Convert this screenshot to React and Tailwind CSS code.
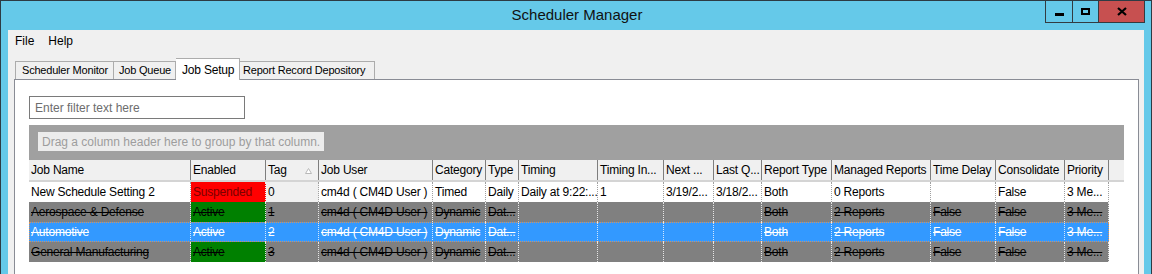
import React from 'react';

const columns = [
  { title: 'Job Name', w: 'w-[162px]' },
  { title: 'Enabled', w: 'w-[75px]' },
  { title: 'Tag', w: 'w-[53px]', sort: true },
  { title: 'Job User', w: 'w-[114px]' },
  { title: 'Category', w: 'w-[53px]' },
  { title: 'Type', w: 'w-[33px]' },
  { title: 'Timing', w: 'w-[79px]' },
  { title: 'Timing In...', w: 'w-[66px]' },
  { title: 'Next ...', w: 'w-[50px]' },
  { title: 'Last Q...', w: 'w-[48px]' },
  { title: 'Report Type', w: 'w-[70px]' },
  { title: 'Managed Reports', w: 'w-[99px]' },
  { title: 'Time Delay', w: 'w-[65px]' },
  { title: 'Consolidate', w: 'w-[69px]' },
  { title: 'Priority', w: 'w-[44px]' },
];

const rows = [
  {
    kind: 'normal',
    cells: ['New Schedule Setting 2', 'Suspended', '0', 'cm4d ( CM4D User )', 'Timed', 'Daily', 'Daily at 9:22:...', '1', '3/19/2...', '3/18/2...', 'Both', '0 Reports', '', 'False', '3 Me...'],
  },
  {
    kind: 'disabled',
    cells: ['Aerospace & Defense', 'Active', '1', 'cm4d ( CM4D User )', 'Dynamic', 'Dat...', '', '', '', '', 'Both', '2 Reports', 'False', 'False', '3 Me...'],
  },
  {
    kind: 'selected',
    cells: ['Automotive', 'Active', '2', 'cm4d ( CM4D User )', 'Dynamic', 'Dat...', '', '', '', '', 'Both', '2 Reports', 'False', 'False', '3 Me...'],
  },
  {
    kind: 'disabled',
    cells: ['General Manufacturing', 'Active', '3', 'cm4d ( CM4D User )', 'Dynamic', 'Dat...', '', '', '', '', 'Both', '2 Reports', 'False', 'False', '3 Me...'],
  },
];

function cellStyle(kind, col, value) {
  // Enabled column keeps its own colours, except on the selected row
  if (kind === 'selected') return 'bg-[#3399ff] text-white line-through border-[#cfe6ff]';
  if (col === 1) {
    if (value === 'Suspended') return 'bg-[#ff0000] text-[#7a0000] border-[#f0f0f0]';
    return 'bg-[#008000] text-black line-through border-[#e0e0e0]';
  }
  if (kind === 'disabled') return 'bg-[#808080] text-black line-through border-[#e6e6e6]';
  if (col === 2) return 'bg-[#f0f0f0] text-black border-[#a0a0a0]';
  return 'bg-white text-black border-[#a0a0a0]';
}

function WindowButtons() {
  return (
    <div className="absolute right-[6px] top-0 flex h-[22px] border border-t-0 border-[#333b40]">
      <div className="flex w-[27px] items-center justify-center border-r border-[#333b40]">
        <div className="mt-[5px] h-[3px] w-[9px] bg-black"></div>
      </div>
      <div className="flex w-[26px] items-center justify-center border-r border-[#333b40]">
        <div className="h-[7px] w-[9px] border-2 border-black"></div>
      </div>
      <div className="flex w-[45px] items-center justify-center bg-[#c75050]">
        <svg width="10" height="9" viewBox="0 0 10 9">
          <path d="M1 1 L9 8 M9 1 L1 8" stroke="black" strokeWidth="2.2" />
        </svg>
      </div>
    </div>
  );
}

export default function App() {
  return (
    <div className="relative h-[274px] w-[1152px] overflow-hidden border-x border-t border-[#2d3b44] bg-[#65c9e9] font-['Liberation_Sans',Arial,sans-serif] text-[12px] text-black">
      {/* title bar */}
      <div className="flex h-[29px] items-center justify-center pl-[2px] text-[15px] text-[#111]">
        Scheduler Manager
      </div>
      <WindowButtons />

      <div className="flex h-[244px] pl-[7px]">
        <div className="flex w-[1136px] flex-col bg-[#f0f0f0]">
          {/* menu */}
          <div className="flex h-[22px] items-center gap-[14px] pl-[7px]">
            <span>File</span>
            <span>Help</span>
          </div>

          {/* tabs */}
          <div className="mt-[6px] flex h-[21px] items-end whitespace-nowrap pl-[7px] text-[11px] tracking-[-0.2px]">
            <div className="flex h-[18px] w-[99px] items-center border border-b-0 border-[#acacac] pl-[6px]">Scheduler Monitor</div>
            <div className="flex h-[18px] w-[62px] items-center border border-b-0 border-l-0 border-[#acacac] pl-[5px]">Job Queue</div>
            <div className="relative z-10 -mb-px flex h-[22px] w-[64px] items-center border border-b-0 border-l-0 border-[#acacac] bg-white pl-[6px] text-[12px]">Job Setup</div>
            <div className="flex h-[18px] w-[135px] items-center border border-b-0 border-l-0 border-[#acacac] pl-[3px]">Report Record Depository</div>
          </div>

          {/* tab page */}
          <div className="ml-[6px] flex w-[1125px] flex-1 flex-col items-start border border-b-0 border-[#898c95] bg-white pl-[14px] pt-[16px]">
            <div className="flex h-[23px] w-[216px] items-center border border-[#7a7a7a] pl-[5px] text-[#6d6d6d]">
              Enter filter text here
            </div>

            <div className="mt-[6px] flex h-[35px] w-[1095px] items-start bg-[#a0a0a0] pl-[9px] pt-[7px]">
              <div className="flex h-[19px] items-center whitespace-nowrap bg-[#ececec] px-[4px] text-[#9d9d9d]">
                Drag a column header here to group by that column.
              </div>
            </div>

            {/* header */}
            <div className="flex h-[22px] w-[1095px] border-b-2 border-[#d4d4d4] bg-[#f0f0f0] tracking-[-0.2px]">
              {columns.map((c, i) => (
                <div
                  key={i}
                  className={`${c.w} relative flex h-[20px] shrink-0 items-center overflow-hidden whitespace-nowrap border-r border-[#7e7e7e] pl-[2px]`}
                >
                  {c.title}
                  {c.sort && (
                    <svg className="absolute right-[6px] top-[8px]" width="7" height="6" viewBox="0 0 7 6">
                      <path d="M3.5 0.5 L6.5 5.5 L0.5 5.5 Z" fill="white" stroke="#b8b8b8" strokeWidth="1" />
                    </svg>
                  )}
                </div>
              ))}
            </div>

            {/* rows */}
            <div className="flex w-[1080px] flex-col tracking-[-0.2px]">
              {rows.map((r, ri) => (
                <div
                  key={ri}
                  className={`flex h-[20px] w-[1080px] ${r.kind === 'selected' ? 'outline-1 -outline-offset-1 outline-dotted outline-[#d9935a]' : ''}`}
                >
                  {r.cells.map((v, ci) => (
                    <div
                      key={ci}
                      className={`${columns[ci].w} ${cellStyle(r.kind, ci, v)} flex h-[20px] shrink-0 items-center overflow-hidden whitespace-nowrap border-r border-dotted pl-[2px]`}
                    >
                      {v}
                    </div>
                  ))}
                </div>
              ))}
            </div>
          </div>
        </div>
      </div>
    </div>
  );
}
